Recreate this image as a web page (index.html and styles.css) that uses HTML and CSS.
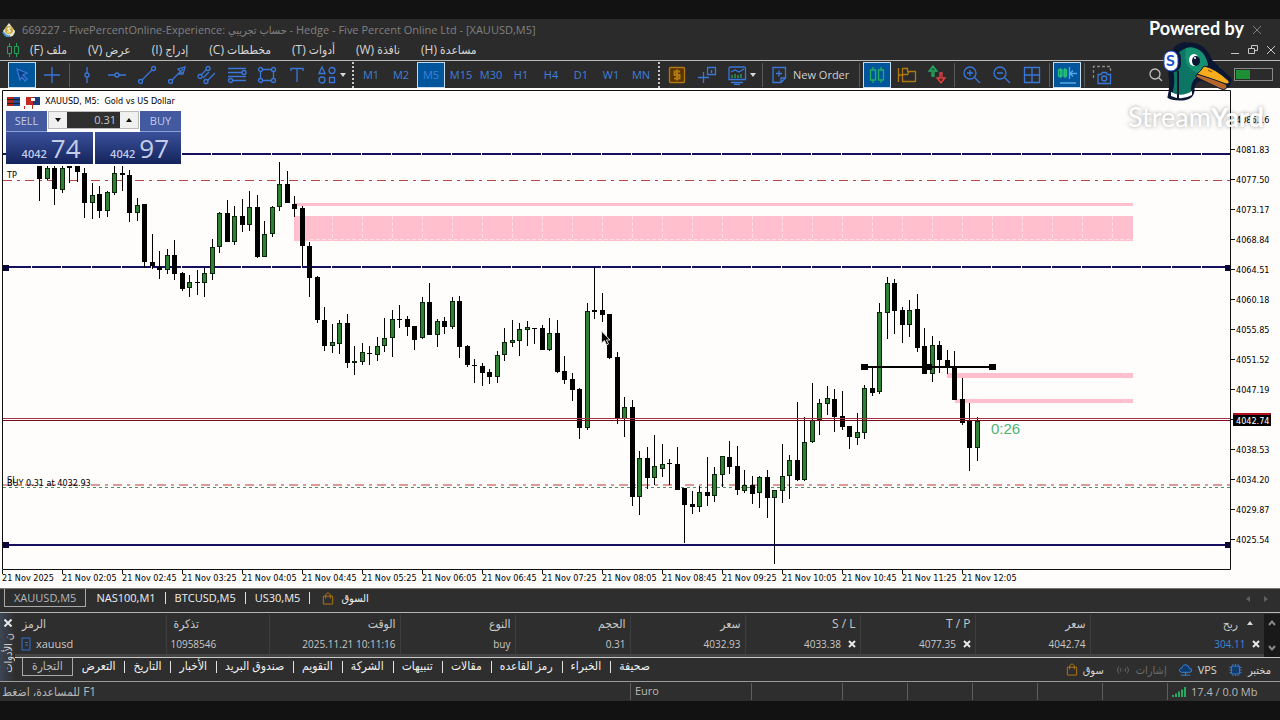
FILE: index.html
```
<!DOCTYPE html>
<html lang="ar" dir="ltr">
<head>
    <meta charset="UTF-8">
    <meta name="viewport" content="width=device-width, initial-scale=1.0">
    <title>XAUUSD,M5</title>
    <link rel="stylesheet" href="styles.css">
</head>
<body>

    <div class="window">
        <header class="title-bar">
            <svg class="app-icon" viewBox="0 0 14 14"><path d="M7 0 L13 8 A6 6 0 0 1 1 8 Z" fill="#e9e7d2"/><circle cx="7" cy="7" r="4" fill="#c9a83a"/><path d="M9 5 H6 V7 H8 V9 H5" stroke="#fff" fill="none"/><path d="M1 9 q3 5 7 4" stroke="#4a9ad0" stroke-width="2" fill="none"/></svg>
            <h1>669227 - FivePercentOnline-Experience: حساب تجريبي - Hedge - Five Percent Online Ltd - [XAUUSD,M5]</h1>
            <button class="close-btn" aria-label="Close"><svg width="10" height="10" viewBox="0 0 10 10"><path d="M1 1 L9 9 M9 1 L1 9"/></svg></button>
        </header>

        <nav class="menu-bar">
            <svg class="menu-icon" viewBox="0 0 14 14"><path d="M3.500 0 V3 M3.500 11 V14 M10.500 0 V3 M10.500 11 V14 M1.500 3.500 H5.500 V10.500 H1.500 Z M8.500 3.500 H12.500 V10.500 H8.500 Z"/></svg>
            <a href="#">(F) ملف</a>
            <a href="#">(V) عرض</a>
            <a href="#">(I) إدراج</a>
            <a href="#">(C) مخططات</a>
            <a href="#">(T) أدوات</a>
            <a href="#">(W) نافذة</a>
            <a href="#">(H) مساعدة</a>
            <div class="window-btns">
                <button aria-label="Minimize"><svg width="10" height="10" viewBox="0 0 10 10"><path d="M1 8.500 H9"/></svg></button>
                <button aria-label="Restore"><svg width="10" height="10" viewBox="0 0 10 10"><path d="M3.500 3.500 V.5 H9.500 V5.500 H6.500 M.5 3.500 H6.500 V8.500 H.5 Z"/></svg></button>
                <button aria-label="Close chart"><svg width="10" height="10" viewBox="0 0 10 10"><path d="M1 1 L9 9 M9 1 L1 9"/></svg></button>
            </div>
        </nav>

        <div class="toolbar">
            <button class="tool active" aria-label="Cursor"><svg viewBox="0 0 20 20"><path d="M5 4 L15 8 L11 10 L15 14 L13 16 L10 12 L8 15 Z" fill="#0c3f7c"/></svg></button>
            <button class="tool" aria-label="Crosshair"><svg viewBox="0 0 20 20"><path d="M10 2 V8 M10 12 V18 M2 10 H8 M12 10 H18 M8 10 H12 M10 8 V12"/></svg></button>
            <span class="sep"></span>
            <button class="tool" aria-label="Vertical line"><svg viewBox="0 0 20 20"><path d="M10 2 V8 M10 12 V18"/><circle cx="10" cy="10" r="2"/></svg></button>
            <button class="tool" aria-label="Horizontal line"><svg viewBox="0 0 20 20"><path d="M1 10 H8 M12 10 H19"/><circle cx="10" cy="10" r="2"/></svg></button>
            <button class="tool" aria-label="Trendline"><svg viewBox="0 0 20 20"><path d="M5 15 L15 5"/><circle cx="3.500" cy="16.500" r="2"/><circle cx="16.500" cy="3.500" r="2"/></svg></button>
            <button class="tool" aria-label="Arrow line"><svg viewBox="0 0 20 20"><path d="M5 15 L16 4 M11 4 L18 2 L16 9 Z M11 9 h4"/><circle cx="3.500" cy="16.500" r="2"/></svg></button>
            <button class="tool" aria-label="Channel"><svg viewBox="0 0 20 20"><path d="M4 10 L9 5 M10 16 L18 8 M6 13 L12 7"/><circle cx="3" cy="11.500" r="2"/><circle cx="11" cy="3.500" r="2"/><circle cx="9" cy="16.500" r="2"/></svg></button>
            <button class="tool" aria-label="Fibonacci"><svg viewBox="0 0 20 20"><path d="M1 3.500 H19 M1 7.500 H15 M1 11.500 H19 M5 15.500 H19 M1 15.500 H2"/><circle cx="17" cy="7.500" r="2"/><circle cx="3.500" cy="15.500" r="2"/></svg></button>
            <button class="tool" aria-label="Rectangle"><svg viewBox="0 0 20 20"><path d="M5 4.500 H15 M5 15.500 H15 M3.500 6 V14 M16.500 6 V14"/><circle cx="3.500" cy="4.500" r="2"/><circle cx="16.500" cy="4.500" r="2"/><circle cx="3.500" cy="15.500" r="2"/><circle cx="16.500" cy="15.500" r="2"/></svg></button>
            <button class="tool" aria-label="Text"><svg viewBox="0 0 20 20"><path d="M4 6 V3.500 H16 V6 M10 3.500 V17"/></svg></button>
            <button class="tool wide" aria-label="Shapes"><svg viewBox="0 0 20 20"><path d="M2 8.500 L5 2 L8 8.500 Z M12.500 12.500 H17.500 V17.500 H12.500 Z"/><circle cx="15" cy="5.500" r="3"/><circle cx="5" cy="15" r="3"/></svg><i class="caret"></i></button>
            <span class="grip"></span>
            <button class="tool">M1</button>
            <button class="tool">M2</button>
            <button class="tool active">M5</button>
            <button class="tool">M15</button>
            <button class="tool">M30</button>
            <button class="tool">H1</button>
            <button class="tool">H4</button>
            <button class="tool">D1</button>
            <button class="tool">W1</button>
            <button class="tool">MN</button>
            <span class="grip"></span>
            <button class="tool gold" aria-label="Symbols"><svg viewBox="0 0 20 20"><rect x="2.500" y="2.500" width="15" height="15" rx="1" fill="#5a3300"/><path d="M13 6.500 H7.500 V10 H12.500 V13.500 H7 M10 4.500 V15.500" stroke-width="2"/></svg></button>
            <button class="tool" aria-label="Data window"><svg viewBox="0 0 20 20"><path d="M1 12.500 H12 M6.500 7 V18 M10.500 2.500 H18.500 V9.500 H10.500 Z M14.500 5 V8"/></svg></button>
            <button class="tool wide" aria-label="Indicators"><svg viewBox="0 0 20 20"><path d="M2 14.500 V3.500 Q2 2 3.500 2 H17 Q18.500 2 18.500 3.500 V14.500 Z M4 17.500 H16 M7 19.500 H13 M4 7 L8 5 L12 7 L17 4"/><path d="M5 13 V10 M8 13 V9 M11 13 V10 M14 13 V9" stroke="#27a862"/></svg><i class="caret"></i></button>
            <span class="sep"></span>
            <button class="new-order"><svg viewBox="0 0 20 20"><path d="M4 2.500 H16.500 V13 L12 17.500 H4 Z M16.500 13 H12 V17.500 M10 5.500 V11.500 M7 8.500 H13"/></svg>New Order</button>
            <span class="sep"></span>
            <button class="tool active green" aria-label="Candlesticks"><svg viewBox="0 0 20 20"><path d="M6 2 V5 M6 15 V18 M14 2 V5 M14 15 V18 M3.500 5 H8.500 V15 H3.500 Z M11.500 5 H16.500 V15 H11.500 Z"/></svg></button>
            <button class="tool gold" aria-label="Templates"><svg viewBox="0 0 20 20"><path d="M1.500 3 V17 M1.500 10 H5 M5.500 16.500 V3.500 H10.500 V6.500 H18.500 V16.500 Z M5.500 9.500 H10.500 L12 6.500"/></svg></button>
            <button class="tool" aria-label="Algo trading"><svg viewBox="0 0 20 20"><path d="M5 11 V6 H2 L6 1 L10 6 H7 V11 Z" stroke="#27a862" fill="#176b3d"/><path d="M13 8 V13 H10 L14 18 L18 13 H15 V8 Z" stroke="#e04545" fill="#6b2020"/></svg></button>
            <span class="sep"></span>
            <button class="tool" aria-label="Zoom in"><svg viewBox="0 0 20 20"><circle cx="8" cy="8" r="6"/><path d="M12.500 12.500 L18 18 M8 5 V11 M5 8 H11"/></svg></button>
            <button class="tool" aria-label="Zoom out"><svg viewBox="0 0 20 20"><circle cx="8" cy="8" r="6"/><path d="M12.500 12.500 L18 18 M5 8 H11"/></svg></button>
            <button class="tool" aria-label="Tile windows"><svg viewBox="0 0 20 20"><path d="M2.500 2.500 H17.500 V17.500 H2.500 Z M10 2.500 V17.500 M2.500 10 H17.500"/></svg></button>
            <span class="sep"></span>
            <button class="tool active" aria-label="Chart shift"><svg viewBox="0 0 20 20"><path d="M3.500 3 V13 M1.500 5 H5 V11 H1.500 Z M8 3 V13 M7 5 H9.500 V11 H7 Z" stroke="#27c07a"/><path d="M12.500 2 V14 M13 8.500 H20 M16 5.500 L13 8.500 L16 11.500 M3 18 H19" stroke="#58a6e8"/></svg></button>
            <span class="sep"></span>
            <button class="tool" aria-label="Screenshot"><svg viewBox="0 0 20 20"><path d="M1.500 13 V1.500 H18.500 V6" stroke="#888" stroke-dasharray="3 2"/><path d="M6 9.500 H9 L10.500 7.500 H14 L15.500 9.500 H18.500 V18.500 H6 Z"/><circle cx="12.200" cy="13.500" r="2.500"/></svg></button>
            <div class="toolbar-end">
                <button class="tool grey" aria-label="Search"><svg viewBox="0 0 20 20"><circle cx="9" cy="9" r="5"/><path d="M12.500 12.500 L16 16"/></svg></button>
                <button class="tool green" aria-label="Update"><svg viewBox="0 0 20 20"><path d="M10 14 V4 M7 6 L10 2 L13 6"/></svg></button>
                <div class="battery"><span></span></div>
            </div>
        </div>

        <main class="chart">
            <svg class="chart-svg" id="chart" viewBox="0 88 1280 500">
                <rect class="chart-bg" x="0" y="88" width="1280" height="500"/>
                <g class="zones">
                    <rect x="294" y="203" width="839" height="3"/>
                    <rect x="294" y="216" width="839" height="25"/>
                    <rect x="947" y="373" width="186" height="5"/>
                    <rect x="955" y="399" width="178" height="4"/>
                </g>
                <path class="zone-grid" d="M310 239.500 H1133"/>
                <g id="zoneGrid"></g>
                <path class="stop-line" d="M3 180.500 H1230"/>
                <path class="stop-line soft" d="M3 485 H1230"/>
                <path class="entry-line" d="M3 487.500 H1230"/>
                <path class="level dashed" d="M2 154 H1230"/>
                <path class="level dashed" d="M2 267 H1230"/>
                <path class="level" d="M2 545 H1230"/>
                <g id="candles"></g>
                <path class="ask-line" d="M3 418.500 H1230"/>
                <path class="bid-line" d="M3 420.500 H1230"/>
                <path class="trend" d="M865 367 H992"/>
                <path class="trend-marks" d="M861 364 h7 v6 h-7 Z M925 364 h7 v6 h-7 Z M989 364 h7 v6 h-7 Z"/>
                <path class="level-marks" d="M3 265 h6 v6 h-6 Z M1225 265 h6 v6 h-6 Z M3 542 h6 v6 h-6 Z M1225 542 h6 v6 h-6 Z"/>
                <path class="frame" d="M2.500 569.500 V90.500 H1230.500 V569.500 Z"/>
                <g id="axes"></g>
                <rect x="1233" y="413" width="38" height="2" fill="#b01020"/>
                <rect x="1233" y="415" width="38" height="11" fill="#000"/>
                <text class="axis price-now" x="1236" y="424">4042.74</text>
                <text class="timer" x="991" y="434">0:26</text>
                <text class="axis" x="7" y="178">TP</text>
                <text class="axis" x="7" y="483">SL</text>
                <text class="axis" x="7" y="486">BUY 0.31 at 4032.93</text>
                <g>
                    <rect x="7" y="97" width="6" height="9" fill="#b3261e"/>
                    <rect x="13" y="97" width="7" height="9" fill="#1f4e9c"/>
                    <path d="M7 99.500 H20 M7 103.500 H20" stroke="#222"/>
                    <rect x="26" y="97" width="7" height="8" fill="#c02a22"/>
                    <rect x="33" y="97" width="7" height="8" fill="#1b3c7a"/>
                    <path d="M31 98 h4 v3 h-4 Z" fill="#fff"/>
                    <path d="M24.500 106 V109 M32.500 102 V109" stroke="#c02a22"/>
                </g>
                <text class="axis" x="45" y="104" xml:space="preserve">XAUUSD, M5:  Gold vs US Dollar</text>
                <path class="pointer" d="M601.500 331 V343 L604.500 340.500 L606.500 345 L608.500 344 L606.500 340 H610 Z"/>
            </svg>

            <form class="one-click">
                <button type="button" class="side sell">SELL</button>
                <div class="volume">
                    <button type="button" aria-label="Less"><i class="caret"></i></button>
                    <input type="text" value="0.31" aria-label="Volume">
                    <button type="button" aria-label="More"><i class="caret up"></i></button>
                </div>
                <button type="button" class="side buy">BUY</button>
                <div class="prices">
                    <div class="price"><small>4042</small><span>74</span></div>
                    <div class="price"><small>4042</small><span>97</span></div>
                </div>
            </form>
        </main>

        <nav class="chart-tabs">
            <a href="#" class="current">XAUUSD,M5</a>
            <a href="#">NAS100,M1</a>
            <a href="#">BTCUSD,M5</a>
            <a href="#">US30,M5</a>
            <a href="#" class="market"><svg class="bag" viewBox="0 0 12 14"><path d="M1 4.500 H11 V13 H1 Z M3.500 7 V3 Q6 -1 8.500 3 V7"/></svg>السوق</a>
            <div class="tab-arrows"><i></i><i class="next"></i></div>
        </nav>

        <section class="terminal">
            <aside class="dock-side">
                <button aria-label="Close panel"><svg width="8" height="8" viewBox="0 0 8 8"><path d="M.5 .5 L7.500 7.500 M7.500 .5 L.5 7.500"/></svg></button>
                <span>ن الأدوات</span>
            </aside>
            <div class="dock-main">
                <div class="trade-list">
                    <table>
                        <colgroup>
                            <col class="c-symbol"><col class="c-ticket"><col class="c-time"><col class="c-num"><col class="c-num"><col class="c-num"><col class="c-num"><col class="c-num"><col class="c-num"><col>
                        </colgroup>
                        <thead>
                            <tr>
                                <th class="start">الرمز</th>
                                <th class="start">تذكرة</th>
                                <th>الوقت</th>
                                <th>النوع</th>
                                <th>الحجم</th>
                                <th>سعر</th>
                                <th>S / L</th>
                                <th>T / P</th>
                                <th>سعر</th>
                                <th class="profit-head">ربح <i class="caret up"></i></th>
                            </tr>
                        </thead>
                        <tbody>
                            <tr>
                                <td class="start symbol"><svg viewBox="0 0 10 14"><path d="M1 1 H9 V13 H1 Z M4 5.500 H7 M4 8 H7"/></svg>xauusd</td>
                                <td class="start">10958546</td>
                                <td>2025.11.21 10:11:16</td>
                                <td>buy</td>
                                <td>0.31</td>
                                <td>4032.93</td>
                                <td>4033.38 <button aria-label="Remove S/L"><svg width="8" height="8" viewBox="0 0 8 8"><path d="M1 1 L7 7 M7 1 L1 7"/></svg></button></td>
                                <td>4077.35 <button aria-label="Remove T/P"><svg width="8" height="8" viewBox="0 0 8 8"><path d="M1 1 L7 7 M7 1 L1 7"/></svg></button></td>
                                <td>4042.74</td>
                                <td class="profit">304.11 <button aria-label="Close position"><svg width="8" height="8" viewBox="0 0 8 8"><path d="M1 1 L7 7 M7 1 L1 7"/></svg></button></td>
                            </tr>
                        </tbody>
                    </table>
                    <div class="scrollbar">
                        <svg width="8" height="6" viewBox="0 0 8 6"><path d="M1 5 L4 1.500 L7 5"/></svg>
                        <svg width="8" height="6" viewBox="0 0 8 6"><path d="M1 1 L4 4.500 L7 1"/></svg>
                    </div>
                </div>
                <nav class="dock-tabs">
                    <a href="#" class="current">التجارة</a>
                    <a href="#">التعرض</a>
                    <a href="#">التاريخ</a>
                    <a href="#">الأخبار</a>
                    <a href="#">صندوق البريد</a>
                    <a href="#">التقويم</a>
                    <a href="#">الشركة</a>
                    <a href="#">تنبيهات</a>
                    <a href="#">مقالات</a>
                    <a href="#">رمز القاعده</a>
                    <a href="#">الخبراء</a>
                    <a href="#">صحيفة</a>
                    <div class="services">
                        <a href="#"><svg class="bag" viewBox="0 0 12 14"><path d="M1 4.500 H11 V13 H1 Z M3.500 7 V3 Q6 -1 8.500 3 V7"/></svg>سوق</a>
                        <a href="#" class="off"><svg class="radio" viewBox="0 0 16 14"><path d="M3 3 Q0 7 3 11 M13 3 Q16 7 13 11 M5.500 5 Q4 7 5.500 9 M10.500 5 Q12 7 10.500 9 M7.500 7 H8.500"/></svg>إشارات</a>
                        <a href="#"><svg class="blue" viewBox="0 0 16 14"><path d="M4 9.500 Q1 9 1.500 6.500 Q2 5 4 5 Q5 1 8.500 1.500 Q11.500 2 12 5 Q15 5 14.500 8 Q14 9.500 12 9.500 Z M8 10 V12.500 M3 12.500 H13"/></svg>VPS</a>
                        <a href="#"><svg class="blue" viewBox="0 0 16 16"><path d="M3.500 3.500 H12.500 V12.500 H3.500 Z"/><path d="M5 1 V3 M8 1 V3 M11 1 V3 M5 13 V15 M8 13 V15 M11 13 V15 M1 5 H3 M1 8 H3 M1 11 H3 M13 5 H15 M13 8 H15 M13 11 H15"/></svg>مختبر</a>
                    </div>
                </nav>
            </div>
        </section>

        <footer class="status-bar">
            <span class="hint">للمساعدة، اضغط F1</span>
            <span class="cell profile">Euro</span>
            <span class="cell wide"></span>
            <span class="cell"></span>
            <span class="cell"></span>
            <span class="cell"></span>
            <span class="cell"></span>
            <span class="cell"></span>
            <span class="cell traffic"><svg viewBox="0 0 14 10"><path d="M1 10 V8 M4 10 V6.500 M7 10 V4.500 M10 10 V2.500 M13 10 V0"/></svg>17.4 / 0.0 Mb</span>
        </footer>

        <div class="watermark">
            <div class="powered">Powered by</div>
            <svg class="duck" viewBox="0 0 76 62">
                <path d="M11 56 Q14 44 12 34 Q10 8 30 3 Q46 2 53 20 L72 38 Q72 47 64 46 L44 38 Q34 40 35 50 Q34 58 22 58 Q13 58 11 56 Z" fill="#0b1633" stroke="#0b1633" stroke-width="3"/>
                <path d="M14 54 Q18 40 15 28 Q16 8 33 6 Q47 8 50 24 L42 35 Q32 38 33 52 Q24 58 14 54 Z" fill="#0d7563"/>
                <path d="M28 7 Q46 5 50 24 L40 32 Q28 28 27 16 Z" fill="#159070"/>
                <path d="M13 51 Q23 57 34 50 V54 Q24 60 13 55 Z" fill="#fff"/>
                <path d="M20 30 V58 M14 14 Q16 3 28 2" stroke="#0b1633" stroke-width="2"/>
                <path d="M38 34 Q43 30 49 33 L69 44 Q69 50 63 48 Q50 42 38 36 Z" fill="#b5672b" stroke="#0b1633"/>
                <path d="M46 25 Q57 27 71 40 Q72 43 68 43 Q55 38 39 33 Q43 30 46 25 Z" fill="#f7ac1c" stroke="#0b1633"/>
                <path d="M50 29 L54 31" stroke="#7a4a10"/>
                <ellipse cx="36" cy="19" rx="5" ry="6" fill="#fff"/>
                <ellipse cx="38" cy="20" rx="4" ry="5" fill="#0b1633"/>
                <circle cx="37" cy="17" r="1" fill="#fff"/>
                <rect x="6" y="9" width="17" height="22" rx="8" fill="#0b1633"/>
                <rect x="6" y="10" width="14" height="20" rx="7" fill="#fff" stroke="#1a4fd0"/>
                <text x="8" y="25">S</text>
            </svg>
            <div class="brand">Stream<b>Yard</b></div>
        </div>
    </div>

    <script src="chart.js"></script>
</body>
</html>
```

FILE: styles.css
```
* {
    box-sizing: border-box;
}
body {
    margin: 0;
    background: #121212;
    color: #d6d6d6;
    font-family: "Open Sans", "Noto Sans", "DejaVu Sans Condensed", sans-serif;
    font-size: 11px;
    line-height: 16px;
}
button {
    border: none;
    background: none;
    padding: 0;
    color: inherit;
    font: inherit;
}
a {
    color: inherit;
    text-decoration: none;
    white-space: nowrap;
}
svg {
    fill: none;
    flex: none;
}
.window {
    position: relative;
    min-height: 100vh;
    padding: 19px 0;
    overflow: hidden;
}

/* title and menu */
.title-bar {
    display: flex;
    align-items: center;
    gap: 6px;
    height: 21px;
    padding: 0 18px 0 2px;
    background: #2b2b2b;
    color: #808080;
}
.title-bar h1 {
    margin: 0;
    flex: 1;
    font-size: 11px;
    font-weight: normal;
    white-space: nowrap;
}
.app-icon {
    width: 14px;
    height: 14px;
}
.close-btn svg {
    display: block;
    stroke: #808080;
}
.menu-bar {
    display: flex;
    align-items: center;
    gap: 21px;
    height: 20px;
    padding: 0 4px 0 6px;
    background: #2b2b2b;
    font-size: 12px;
}
.menu-icon {
    width: 14px;
    height: 14px;
    margin-right: -11px;
    stroke: #1fa35a;
}
.window-btns {
    display: flex;
    gap: 8px;
    margin-left: auto;
}
.window-btns svg {
    display: block;
    stroke: #c8c8c8;
}

/* toolbar */
.toolbar {
    display: flex;
    align-items: center;
    height: 28px;
    padding-left: 7px;
    border-top: 1px solid #b8bab8;
    background: #2b2b2b;
    color: #4080dc;
}
.tool {
    display: flex;
    align-items: center;
    justify-content: center;
    flex: none;
    width: 28px;
    height: 26px;
    margin: 0 1px;
}
.tool.wide {
    width: 36px;
    gap: 3px;
}
.tool svg,
.new-order svg {
    width: 20px;
    height: 20px;
    stroke: #3878dc;
    stroke-width: 1.3;
}
.tool.active {
    border: 1px solid #c4dcee;
    background: #00559b;
}
.tool.gold svg {
    stroke: #b07a10;
}
.tool.green svg {
    stroke: #1fb060;
}
.tool.grey svg {
    stroke: #c0c0c0;
}
.sep {
    width: 1px;
    height: 24px;
    margin: 0 2px;
    background: #5a5a5a;
}
.grip {
    width: 2px;
    height: 26px;
    margin: 0 2px;
    background: repeating-linear-gradient(#c8c8c8 0 2px, #2b2b2b 2px 4px);
}
.caret {
    width: 0;
    height: 0;
    border: 3px solid transparent;
    border-top: 4px solid #d8d8d8;
    border-bottom: none;
}
.caret.up {
    border-top: none;
    border-bottom: 4px solid #d8d8d8;
}
.new-order {
    display: flex;
    align-items: center;
    gap: 4px;
    padding: 0 8px 0 4px;
    color: #d0d0d0;
    white-space: nowrap;
}
.toolbar-end {
    display: flex;
    align-items: center;
    margin-left: auto;
    padding-right: 7px;
}
.toolbar-end .green {
    margin-left: 34px;
}
.battery {
    width: 39px;
    height: 13px;
    padding: 1px;
    border: 1px solid #8a8a8a;
}
.battery span {
    display: block;
    width: 14px;
    height: 9px;
    background: #1f8f35;
}

/* chart */
.chart {
    position: relative;
    background: #fffcfc;
}
.chart-svg {
    display: block;
    width: 100%;
    height: auto;
}
.chart-bg {
    fill: #fffcfc;
}
.frame {
    stroke: #111;
}
.zones rect {
    fill: #ffbfcd;
}
.zone-grid {
    stroke: #ffdde4;
    stroke-dasharray: 4 2;
}
.stop-line {
    stroke: #b84444;
    stroke-dasharray: 9 5 3 5;
}
.stop-line.soft {
    stroke: #dd9a96;
    stroke-width: 2;
}
.entry-line {
    stroke: #4f8f66;
    stroke-dasharray: 3 3;
}
.level {
    stroke: #15105e;
    stroke-width: 2;
}
.level.dashed {
    stroke-dasharray: 29 1;
}
.level-marks {
    fill: #0a0638;
}
.ask-line {
    stroke: #a03444;
}
.bid-line {
    stroke: #7a0a1e;
}
.trend {
    stroke: #000;
    stroke-width: 2;
}
.trend-marks {
    fill: #000;
}
.wick {
    stroke: #000;
}
.body-down {
    fill: #000;
}
.body-up {
    fill: #2f8034;
    stroke: #0a250a;
}
.tick {
    stroke: #111;
}
.axis {
    fill: #000;
    font-family: "DejaVu Sans Condensed", sans-serif;
    font-size: 9px;
}
.price-now {
    fill: #fff;
}
.timer {
    fill: #4cb27a;
    font-family: "Liberation Sans", sans-serif;
    font-size: 15px;
}
.pointer {
    fill: #000;
    stroke: #ddd;
    stroke-width: 1;
}

/* one click trading */
.one-click {
    position: absolute;
    top: 23px;
    left: 6px;
    display: grid;
    grid-template-columns: 41px minmax(0, 1fr) 41px;
    grid-template-rows: 21px 32px;
    width: 175px;
    background: #fffcfc;
    color: #c3cdea;
}
.side {
    background: #4359a0;
    border-bottom: 1px solid #8fa0d2;
}
.volume {
    display: flex;
    height: 18px;
    margin: 0 1px;
    border: 1px solid #bbb;
}
.volume button {
    display: flex;
    align-items: center;
    justify-content: center;
    flex: none;
    width: 18px;
    background: #f0f0f0;
}
.volume .caret {
    border-top-color: #111;
    border-bottom-color: #111;
}
.volume input {
    flex: 1;
    width: 0;
    min-width: 0;
    padding: 0 4px 0 0;
    border: none;
    background: #303030;
    color: #c8c8c8;
    font: inherit;
    text-align: right;
}
.prices {
    grid-column: 1 / 4;
    display: grid;
    grid-template-columns: 1fr 1fr;
    gap: 2px;
}
.price {
    display: flex;
    align-items: baseline;
    justify-content: flex-end;
    gap: 4px;
    height: 32px;
    padding-right: 12px;
    background: linear-gradient(#3a509a, #14245c);
    line-height: 32px;
}
.price small {
    font-size: 11px;
    font-weight: 600;
}
.price span {
    font-size: 26px;
}

/* chart tabs */
.chart-tabs {
    display: flex;
    align-items: flex-start;
    height: 25px;
    padding-left: 4px;
    border-top: 1px solid #777;
    border-bottom: 1px solid #b5b5b5;
    background: #2e2e2e;
    color: #f0f0f0;
}
.chart-tabs a {
    position: relative;
    height: 18px;
    padding: 1px 9px 1px 10px;
}
.chart-tabs a + a + a::before,
.dock-tabs > a + a + a::before {
    content: "";
    position: absolute;
    left: 0;
    top: 3px;
    width: 1px;
    height: 12px;
    background: #e0e0e0;
}
.chart-tabs .current,
.dock-tabs .current {
    border: 1px solid #a8a8a8;
    border-top: none;
    color: #b8b8b8;
}
.chart-tabs .current {
    padding: 1px 9px;
}
.chart-tabs .market {
    display: flex;
    align-items: center;
    gap: 7px;
    padding-left: 13px;
}
.bag {
    width: 12px;
    height: 13px;
    stroke: #b57a10;
}
.tab-arrows {
    display: flex;
    gap: 14px;
    margin: 7px 12px 0 auto;
}
.tab-arrows i {
    border: 3px solid transparent;
    border-left: none;
    border-right: 4px solid #606060;
}
.tab-arrows .next {
    border-right: none;
    border-left: 4px solid #606060;
}

/* terminal */
.terminal {
    display: flex;
    height: 69px;
    border-bottom: 1px solid #9a9a9a;
    background: #2e2e2e;
}
.dock-side {
    display: flex;
    flex-direction: column;
    align-items: center;
    gap: 6px;
    width: 15px;
    padding-top: 6px;
    background: linear-gradient(90deg, #3c4654, #2e2e2e);
    overflow: hidden;
}
.dock-side svg,
td button svg {
    display: block;
    stroke: #e8e8e8;
    stroke-width: 2;
}
.dock-side span {
    writing-mode: vertical-rl;
    transform: rotate(180deg);
    line-height: 14px;
    white-space: nowrap;
}
.dock-main {
    flex: 1;
    min-width: 0;
}
.trade-list {
    display: flex;
    height: 45px;
    padding-top: 1px;
    border-bottom: 1px solid #c8c8c8;
}
table {
    flex: 1;
    table-layout: fixed;
    width: 100%;
    border-collapse: collapse;
    border-bottom: 3px solid #444;
    color: #c8c8c8;
}
.c-symbol {
    width: 151px;
}
.c-ticket {
    width: 103px;
}
.c-time {
    width: 131px;
}
.c-num {
    width: 115px;
}
th,
td {
    height: 20px;
    padding: 0 4px;
    border-right: 1px solid #3e3e3e;
    font-weight: normal;
    text-align: right;
    white-space: nowrap;
}
th {
    font-size: 12px;
}
td {
    font-size: 10px;
}
th:last-child,
td:last-child {
    border-right: none;
}
th.start,
td.start {
    text-align: left;
}
th.start {
    padding-left: 7px;
}
td button {
    display: inline-block;
    margin-left: 4px;
}
td.symbol {
    font-size: 11px;
}
.symbol svg {
    width: 10px;
    height: 14px;
    margin: 0 5px 0 2px;
    vertical-align: -3px;
    stroke: #2f6fd0;
}
.profit {
    color: #3b86d8;
}
.profit-head .caret {
    display: inline-block;
    margin: 0 7px 3px 6px;
}
.scrollbar {
    display: flex;
    flex-direction: column;
    align-items: center;
    justify-content: space-between;
    width: 16px;
    padding: 6px 0;
    background: #191919;
}
.scrollbar svg {
    stroke: #888;
    stroke-width: 2;
}
.dock-tabs {
    display: flex;
    height: 23px;
    padding-left: 7px;
    color: #f0f0f0;
}
.dock-tabs > a {
    position: relative;
    height: 18px;
    padding: 0 9px;
    font-size: 12px;
}
.services {
    display: flex;
    align-items: center;
    gap: 11px;
    margin-left: auto;
    padding-right: 9px;
}
.services a {
    display: flex;
    align-items: center;
    gap: 5px;
    color: #d6d6d6;
}
.services .off {
    color: #6c6c6c;
}
.radio {
    width: 16px;
    height: 12px;
    stroke: #6c6c6c;
}
.blue {
    width: 15px;
    height: 14px;
    fill: #123c70;
    stroke: #3b86d8;
}

/* status bar */
.status-bar {
    display: flex;
    align-items: center;
    height: 19px;
    background: #2e2e2e;
    color: #b8b8b8;
}
.hint {
    flex: 1;
    padding-left: 2px;
    font-size: 12px;
    white-space: nowrap;
}
.cell {
    width: 65px;
    height: 17px;
    padding-left: 4px;
    border-left: 1px solid #5e5e5e;
}
.cell.profile {
    width: 121px;
}
.cell.wide {
    width: 91px;
}
.cell.traffic {
    display: flex;
    align-items: center;
    gap: 5px;
    width: 113px;
    white-space: nowrap;
}
.traffic svg {
    width: 14px;
    height: 10px;
    stroke: #27a862;
    stroke-width: 2;
}

/* stream watermark */
.watermark {
    position: absolute;
    top: 16px;
    right: 12px;
    width: 140px;
    color: #fff;
    font-family: Lato, "Open Sans", sans-serif;
    pointer-events: none;
}
.powered {
    padding-left: 21px;
    font-size: 18px;
    font-weight: bold;
    line-height: 24px;
}
.duck {
    display: block;
    width: 76px;
    height: 62px;
    margin: 1px 0 0 30px;
}
.duck text {
    fill: #1a4fd0;
    font-size: 16px;
    font-weight: bold;
}
.brand {
    font-size: 27px;
    line-height: 28px;
    text-shadow: 0 0 4px rgba(0, 0, 0, 0.4);
}
```

FILE: chart.js
```
const SVG_NS = "http://www.w3.org/2000/svg";

// [high, open/close top, open/close bottom, low, direction]
const candles = [
    [166, 166, 179, 201, "d"], [166, 168, 179, 180, "u"], [166, 168, 189, 205, "d"], [166, 168, 190, 193, "u"],
    [166, 166, 168, 183, "d"], [166, 166, 172, 182, "d"], [168, 173, 203, 218, "d"], [183, 195, 203, 219, "u"],
    [186, 194, 211, 218, "d"], [191, 192, 211, 217, "u"], [166, 173, 193, 195, "u"], [166, 173, 175, 191, "d"],
    [170, 175, 213, 222, "d"], [198, 205, 213, 221, "u"], [204, 204, 262, 268, "d"], [234, 262, 266, 269, "d"],
    [251, 267, 270, 279, "d"], [249, 255, 270, 274, "u"], [240, 255, 274, 280, "d"], [272, 273, 289, 291, "d"],
    [275, 282, 288, 297, "u"], [270, 282, 283, 295, "d"], [268, 273, 283, 297, "u"], [239, 247, 274, 280, "u"],
    [212, 213, 247, 253, "u"], [200, 213, 242, 242, "d"], [206, 216, 242, 245, "u"], [199, 216, 225, 232, "d"],
    [191, 207, 225, 231, "u"], [195, 207, 257, 258, "d"], [221, 234, 257, 257, "u"], [206, 207, 234, 237, "u"],
    [162, 184, 207, 211, "u"], [171, 184, 203, 203, "d"], [196, 204, 209, 217, "d"], [206, 208, 246, 266, "d"],
    [242, 246, 278, 297, "d"], [276, 277, 320, 323, "d"], [307, 320, 346, 351, "d"], [324, 342, 346, 353, "u"],
    [320, 323, 344, 354, "u"], [314, 323, 363, 368, "d"], [346, 361, 363, 375, "u"], [343, 352, 362, 365, "u"],
    [346, 353, 354, 365, "d"], [337, 346, 355, 361, "u"], [318, 338, 346, 352, "u"], [310, 319, 338, 357, "u"],
    [305, 319, 320, 328, "d"], [316, 319, 327, 336, "d"], [326, 326, 340, 350, "d"], [297, 302, 338, 339, "u"],
    [283, 302, 335, 335, "d"], [319, 321, 335, 347, "u"], [317, 321, 327, 334, "d"], [297, 301, 327, 329, "u"],
    [296, 301, 347, 358, "d"], [345, 346, 365, 367, "d"], [359, 365, 366, 383, "d"], [363, 366, 373, 386, "d"],
    [369, 372, 377, 384, "d"], [351, 355, 377, 383, "u"], [328, 342, 355, 361, "u"], [320, 340, 343, 347, "u"],
    [323, 329, 341, 356, "u"], [321, 327, 330, 346, "u"], [328, 328, 329, 344, "d"], [325, 328, 350, 350, "d"],
    [318, 333, 350, 351, "u"], [320, 333, 372, 373, "d"], [356, 371, 380, 384, "d"], [373, 379, 390, 401, "d"],
    [388, 389, 428, 439, "d"], [303, 311, 428, 430, "u"], [268, 310, 312, 319, "d"], [293, 310, 315, 322, "d"],
    [314, 314, 358, 359, "d"], [352, 357, 419, 424, "d"], [397, 407, 419, 437, "u"], [400, 407, 497, 506, "d"],
    [451, 458, 497, 515, "u"], [447, 458, 478, 489, "d"], [435, 466, 478, 485, "u"], [444, 464, 469, 477, "u"],
    [459, 463, 464, 485, "d"], [447, 464, 490, 490, "d"], [488, 488, 505, 543, "d"], [491, 504, 507, 514, "d"],
    [486, 492, 507, 512, "u"], [457, 492, 496, 506, "d"], [467, 474, 496, 502, "u"], [456, 456, 475, 487, "u"],
    [441, 457, 467, 474, "d"], [446, 466, 490, 495, "d"], [470, 485, 491, 493, "u"], [476, 485, 494, 504, "d"],
    [476, 477, 493, 508, "u"], [470, 477, 498, 518, "d"], [490, 490, 498, 564, "u"], [444, 476, 491, 503, "u"],
    [455, 460, 476, 499, "u"], [402, 460, 480, 481, "d"], [417, 442, 480, 481, "u"], [383, 420, 442, 443, "u"],
    [399, 403, 420, 435, "u"], [386, 398, 404, 415, "u"], [389, 399, 417, 432, "d"], [391, 416, 427, 430, "d"],
    [426, 426, 437, 449, "d"], [413, 432, 438, 445, "u"], [385, 388, 433, 439, "u"], [367, 388, 393, 396, "d"],
    [303, 312, 392, 394, "u"], [277, 283, 313, 339, "u"], [279, 283, 311, 334, "d"], [307, 310, 325, 343, "d"],
    [300, 310, 325, 337, "u"], [294, 309, 348, 352, "d"], [328, 346, 374, 374, "d"], [336, 345, 374, 382, "u"],
    [341, 345, 360, 373, "d"], [350, 360, 367, 374, "d"], [351, 367, 400, 400, "d"], [378, 399, 423, 425, "d"],
    [403, 421, 448, 471, "d"], [417, 421, 448, 461, "u"]
];

const times = ["2025", "02:05", "02:45", "03:25", "04:05", "04:45", "05:25", "06:05", "06:45", "07:25",
    "08:05", "08:45", "09:25", "10:05", "10:45", "11:25", "12:05"];

function add(parent, name, attrs, text) {
    const el = document.createElementNS(SVG_NS, name);
    for (const key in attrs) {
        el.setAttribute(key, attrs[key]);
    }
    if (text) {
        el.textContent = text;
    }
    document.getElementById(parent).appendChild(el);
}

candles.forEach(([high, top, bottom, low, dir], i) => {
    const x = Math.floor(39.5 + i * 7.5);
    add("candles", "path", { class: "wick", d: `M${x + 0.5} ${high} V${low}` });
    if (dir === "u") {
        add("candles", "rect", { class: "body-up", x: x - 1.5, y: top + 0.5, width: 4, height: bottom - top - 1 });
    } else {
        add("candles", "rect", { class: "body-down", x: x - 2, y: top, width: 5, height: bottom - top });
    }
});

// price scale, one label every 30 units
for (let i = 0; i < 15; i++) {
    const y = 120 + i * 30;
    add("axes", "path", { class: "tick", d: `M1231 ${y - 0.5} h4` });
    if (i !== 10) {
        add("axes", "text", { class: "axis", x: 1236, y: y + 3 }, (4086.16 - i * 4.33).toFixed(2));
    }
}

times.forEach((t, i) => {
    const x = 2 + i * 60;
    add("axes", "path", { class: "tick", d: `M${x + 0.5} 570 v4` });
    add("axes", "text", { class: "axis", x: x, y: 581 }, "21 Nov " + t);
});

for (let x = 332; x < 1133; x += 30) {
    add("zoneGrid", "path", { class: "zone-grid", d: `M${x + 0.5} 216 V241` });
}
```
